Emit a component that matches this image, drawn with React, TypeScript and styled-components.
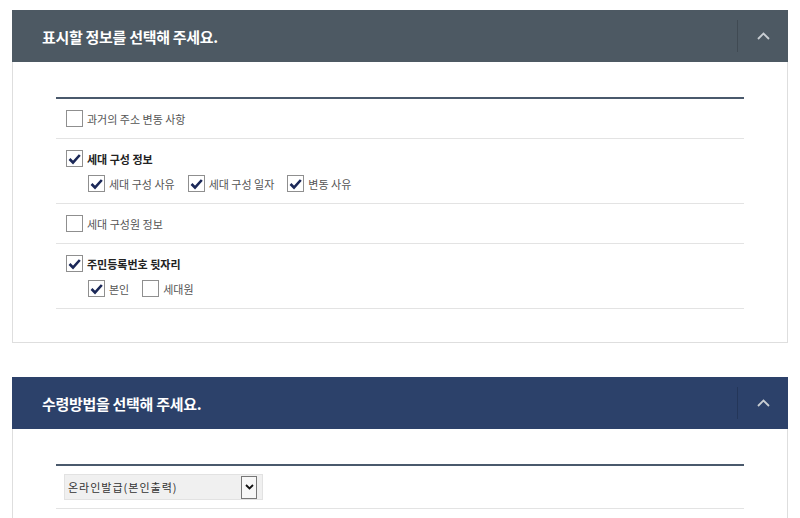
import React from 'react';
import styled, { createGlobalStyle } from 'styled-components';

const GlobalStyle = createGlobalStyle`
    body {
        margin: 0;
        background: #fff;
        font-family: 'Noto Sans CJK KR', 'Noto Sans', sans-serif;
    }
`;

const Page = styled.div`
    padding: 10px 12px;
    display: flex;
    flex-direction: column;
    gap: 34px;
`;

const Panel = styled.section`
    border: 1px solid #dedede;
    background: #fff;
`;

const Header = styled.header<{ tone: string }>`
    height: 52px;
    margin: -1px -1px 0;
    background: ${({ tone }) => tone};
    display: flex;
    align-items: center;
`;

const Title = styled.h2`
    flex: 1;
    margin: 0;
    padding-left: 30px;
    color: #fff;
    font-size: 15px;
    font-weight: 700;
    letter-spacing: -0.3px;
`;

const Toggle = styled.button`
    width: 51px;
    height: 32px;
    padding: 0;
    border: 0;
    border-left: 1px solid rgba(0, 0, 0, 0.16);
    background: transparent;
    display: flex;
    align-items: center;
    justify-content: center;
`;

const Body = styled.div`
    padding: 35px 43px 33px;
`;

const List = styled.ul`
    margin: 0;
    padding: 0;
    list-style: none;
    border-top: 2px solid #4a596c;
`;

const Row = styled.li`
    padding: 11px 10px;
    border-bottom: 1px solid #e3e3e3;
`;

const SelectRow = styled.li`
    padding: 8px 8px 8px;
    border-bottom: 1px solid #e3e3e3;
`;

const Line = styled.div<{ sub?: boolean }>`
    display: flex;
    gap: 13px;
    margin-top: ${({ sub }) => (sub ? '8px' : '0')};
    padding-left: ${({ sub }) => (sub ? '22px' : '0')};
`;

const Item = styled.label<{ strong?: boolean }>`
    display: flex;
    align-items: center;
    gap: 4px;
    height: 17px;
    font-size: 11px;
    color: ${({ strong }) => (strong ? '#222' : '#555')};
    font-weight: ${({ strong }) => (strong ? 700 : 400)};
`;

const Box = styled.span`
    width: 15px;
    height: 15px;
    border: 1px solid #8f8f8f;
    background: #fff;
    display: flex;
    align-items: center;
    justify-content: center;
`;

const Select = styled.div`
    width: 199px;
    height: 26px;
    border: 1px solid #e2e2e2;
    background: #f0f0f0;
    display: flex;
    align-items: center;
    justify-content: space-between;
    padding: 0 5px 0 3px;
    box-sizing: border-box;
    font-size: 11px;
    color: #333;
    letter-spacing: 1px;
`;

const SelectArrow = styled.span`
    width: 14px;
    height: 21px;
    border: 1px solid #777;
    background: #f7f7f7;
    display: flex;
    align-items: center;
    justify-content: center;
`;

const Check = ({ label, checked, strong }: { label: string; checked?: boolean; strong?: boolean }) => (
    <Item strong={strong}>
        <Box>
            {checked && (
                <svg width="13" height="12" viewBox="0 0 13 12">
                    <path d="M1.5 6 L5 9.5 L11.8 2" fill="none" stroke="#1b2858" strokeWidth="2.6" />
                </svg>
            )}
        </Box>
        {label}
    </Item>
);

const ChevronUp = () => (
    <svg width="13" height="8" viewBox="0 0 13 8">
        <polyline points="1,7 6.5,1.5 12,7" fill="none" stroke="#c9ced3" strokeWidth="1.8" />
    </svg>
);

export default function App() {
    return (
        <>
            <GlobalStyle />
            <Page>
                <Panel>
                    <Header tone="#4d5963">
                        <Title>표시할 정보를 선택해 주세요.</Title>
                        <Toggle>
                            <ChevronUp />
                        </Toggle>
                    </Header>
                    <Body>
                        <List>
                            <Row>
                                <Line>
                                    <Check label="과거의 주소 변동 사항" />
                                </Line>
                            </Row>
                            <Row>
                                <Line>
                                    <Check label="세대 구성 정보" checked strong />
                                </Line>
                                <Line sub>
                                    <Check label="세대 구성 사유" checked />
                                    <Check label="세대 구성 일자" checked />
                                    <Check label="변동 사유" checked />
                                </Line>
                            </Row>
                            <Row>
                                <Line>
                                    <Check label="세대 구성원 정보" />
                                </Line>
                            </Row>
                            <Row>
                                <Line>
                                    <Check label="주민등록번호 뒷자리" checked strong />
                                </Line>
                                <Line sub>
                                    <Check label="본인" checked />
                                    <Check label="세대원" />
                                </Line>
                            </Row>
                        </List>
                    </Body>
                </Panel>
                <Panel>
                    <Header tone="#2c416a">
                        <Title>수령방법을 선택해 주세요.</Title>
                        <Toggle>
                            <ChevronUp />
                        </Toggle>
                    </Header>
                    <Body>
                        <List>
                            <SelectRow>
                                <Select>
                                    온라인발급(본인출력)
                                    <SelectArrow>
                                        <svg width="9" height="6" viewBox="0 0 9 6">
                                            <polyline points="1,1 4.5,4.5 8,1" fill="none" stroke="#111" strokeWidth="1.8" />
                                        </svg>
                                    </SelectArrow>
                                </Select>
                            </SelectRow>
                        </List>
                    </Body>
                </Panel>
            </Page>
        </>
    );
}
